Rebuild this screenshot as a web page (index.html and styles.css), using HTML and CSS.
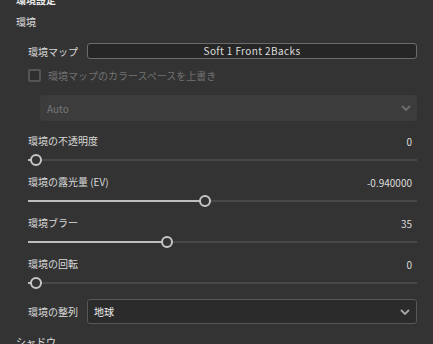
FILE: index.html
```html
<!DOCTYPE html>
<html lang="ja">
<head>
<meta charset="utf-8">
<link rel="stylesheet" href="styles.css">
</head>
<body>
<div class="panel">
  <div class="group-title">環境設定</div>
  <div class="section-title">環境</div>

  <div class="field map-row">
    <span class="field-label">環境マップ</span>
    <div class="text-box">Soft 1 Front 2Backs</div>
  </div>

  <div class="check-row">
    <span class="checkbox"></span>
    <span class="check-label">環境マップのカラースペースを上書き</span>
  </div>

  <div class="select disabled">
    <span>Auto</span>
    <svg class="chev" width="10" height="6" viewBox="0 0 10 6"><path d="M1 1 L5 5 L9 1" fill="none" stroke="currentColor" stroke-width="1.8"/></svg>
  </div>

  <div class="label-row"><span>環境の不透明度</span><span class="value">0</span></div>
  <div class="slider" style="--p:0"><div class="track"></div><div class="fill"></div><div class="thumb"></div></div>

  <div class="label-row"><span>環境の露光量 (EV)</span><span class="value">-0.940000</span></div>
  <div class="slider" style="--p:0.453"><div class="track"></div><div class="fill"></div><div class="thumb"></div></div>

  <div class="label-row"><span>環境ブラー</span><span class="value">35</span></div>
  <div class="slider" style="--p:0.35"><div class="track"></div><div class="fill"></div><div class="thumb"></div></div>

  <div class="label-row"><span>環境の回転</span><span class="value">0</span></div>
  <div class="slider" style="--p:0"><div class="track"></div><div class="fill"></div><div class="thumb"></div></div>

  <div class="field align-row">
    <span class="field-label">環境の整列</span>
    <div class="select boxed">
      <span>地球</span>
      <svg class="chev" width="10" height="6" viewBox="0 0 10 6"><path d="M1 1 L5 5 L9 1" fill="none" stroke="currentColor" stroke-width="1.8"/></svg>
    </div>
  </div>

  <div class="section-title shadow">シャドウ</div>
</div>
</body>
</html>
```

FILE: styles.css
```css
html, body {
  margin: 0;
  padding: 0;
  background: #333333;
  overflow: hidden;
}

body {
  width: 433px;
  height: 344px;
  font-family: "Noto Sans CJK JP", "Noto Sans", sans-serif;
  font-size: 10px;
  color: #d9d9d9;
}

.panel {
  display: flex;
  flex-direction: column;
  padding: 0 16px 0 0;
}

.group-title {
  margin-top: -6px;
  height: 12px;
  line-height: 12px;
  padding-left: 16px;
  font-weight: bold;
  color: #ececec;
}

.section-title {
  margin-top: 8px;
  height: 16px;
  line-height: 16px;
  padding-left: 16px;
  color: #e0e0e0;
}

.field {
  display: flex;
  align-items: center;
  padding-left: 28px;
}

.field-label {
  width: 59px;
  flex: none;
  white-space: nowrap;
}

.map-row {
  margin-top: 13px;
  height: 16px;
}

.text-box {
  flex: 1;
  height: 16px;
  box-sizing: border-box;
  border: 1px solid #6b6b6b;
  border-radius: 3px;
  background: #262626;
  color: #dedede;
  text-align: center;
  line-height: 14px;
  letter-spacing: 0.4px;
}

.check-row {
  margin-top: 10px;
  height: 13px;
  display: flex;
  align-items: center;
  gap: 7px;
  padding-left: 28px;
}

.checkbox {
  width: 13px;
  height: 13px;
  box-sizing: border-box;
  border: 2px solid #555555;
  border-radius: 2px;
  background: #2f2f2f;
}

.check-label {
  color: #727272;
}

.select {
  display: flex;
  align-items: center;
  justify-content: space-between;
  box-sizing: border-box;
  border-radius: 3px;
  padding: 0 6px 0 7px;
}

.select.disabled {
  margin: 13px 0 0 40px;
  height: 26px;
  background: #3c3c3c;
  color: #787878;
}

.select.boxed {
  flex: 1;
  height: 25px;
  border: 1px solid #575757;
  background: #2b2b2b;
  color: #efefef;
  padding-left: 6px;
}

.select.boxed .chev {
  color: #a8a8a8;
}

.chev {
  color: #6e6e6e;
}

.label-row {
  height: 20px;
  display: flex;
  align-items: center;
  justify-content: space-between;
  padding: 0 5px 0 28px;
}

.panel > .select.disabled + .label-row {
  margin-top: 9px;
}

.value {
  color: #dcdcdc;
  padding-top: 2px;
}

.slider {
  position: relative;
  height: 21px;
  margin-left: 28px;
}

.track,
.fill {
  position: absolute;
  left: 0;
  top: 9px;
  height: 2px;
}

.track {
  right: 0;
  background: #484848;
}

.fill {
  width: calc(8px + var(--p) * (100% - 16px));
  background: #bdbdbd;
}

.thumb {
  position: absolute;
  top: 4px;
  left: calc(2px + var(--p) * (100% - 16px));
  width: 12px;
  height: 12px;
  box-sizing: border-box;
  border: 2px solid #c6c6c6;
  border-radius: 50%;
  background: #333333;
}

.align-row {
  margin-top: 5px;
  height: 25px;
}

.section-title.shadow {
  margin-top: 10px;
}
```
